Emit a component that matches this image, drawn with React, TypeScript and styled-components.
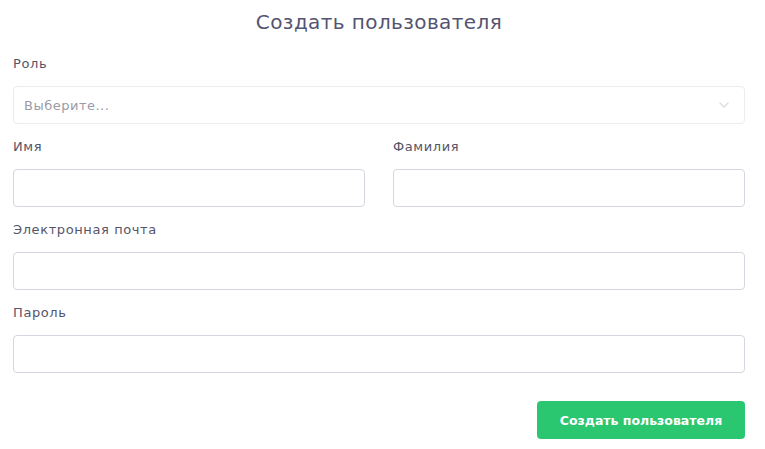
import * as React from "react";
import styled, { createGlobalStyle } from "styled-components";

const GlobalStyle = createGlobalStyle`
  body {
    margin: 0;
    background: #fff;
    font-family: "DejaVu Sans", "Noto Sans", sans-serif;
  }
`;

const Page = styled.div`
  padding: 8px 20px 10px 13px;
  width: 765px;
  box-sizing: border-box;
`;

const Title = styled.h1`
  margin: 0 0 19px;
  font-size: 20px;
  line-height: 28px;
  font-weight: 400;
  letter-spacing: 0.4px;
  color: #545470;
  text-align: center;
`;

const Form = styled.form`
  display: flex;
  flex-direction: column;
  gap: 14px;
`;

const Row = styled.div`
  display: grid;
  grid-template-columns: 1fr 1fr;
  gap: 28px;
`;

const Field = styled.div`
  display: flex;
  flex-direction: column;
  gap: 14px;
`;

const Label = styled.label`
  font-size: 13px;
  line-height: 17px;
  letter-spacing: 0.6px;
  color: #55556a;
`;

const Input = styled.input`
  height: 38px;
  box-sizing: border-box;
  border: 1px solid #d6d6df;
  border-radius: 4px;
  padding: 0 10px;
  font: inherit;
  font-size: 13px;
  outline: none;
  background: #fff;
`;

const SelectBox = styled.div`
  height: 38px;
  box-sizing: border-box;
  border: 1px solid #ececf0;
  border-radius: 4px;
  padding: 0 12px 0 10px;
  display: flex;
  align-items: center;
  justify-content: space-between;
  font-size: 13px;
  letter-spacing: 0.5px;
  color: #9b9ba6;
`;

const Chevron = styled.svg`
  width: 16px;
  height: 16px;
  color: #dcdce2;
`;

const Actions = styled.div`
  display: flex;
  justify-content: flex-end;
  margin-top: 14px;
`;

const Button = styled.button`
  height: 38px;
  width: 208px;
  border: none;
  border-radius: 4px;
  background: #2bc670;
  color: #fff;
  font: inherit;
  font-size: 12.5px;
  font-weight: 600;
  cursor: pointer;
`;

export default function App() {
  return (
    <Page>
      <GlobalStyle />
      <Title>Создать пользователя</Title>
      <Form onSubmit={(e) => e.preventDefault()}>
        <Field>
          <Label>Роль</Label>
          <SelectBox>
            <span>Выберите...</span>
            <Chevron viewBox="0 0 24 24" fill="none" stroke="currentColor" strokeWidth="2" strokeLinecap="round">
              <path d="M6 9l6 6 6-6" />
            </Chevron>
          </SelectBox>
        </Field>
        <Row>
          <Field>
            <Label>Имя</Label>
            <Input />
          </Field>
          <Field>
            <Label>Фамилия</Label>
            <Input />
          </Field>
        </Row>
        <Field>
          <Label>Электронная почта</Label>
          <Input type="email" />
        </Field>
        <Field>
          <Label>Пароль</Label>
          <Input type="password" />
        </Field>
        <Actions>
          <Button type="submit">Создать пользователя</Button>
        </Actions>
      </Form>
    </Page>
  );
}
